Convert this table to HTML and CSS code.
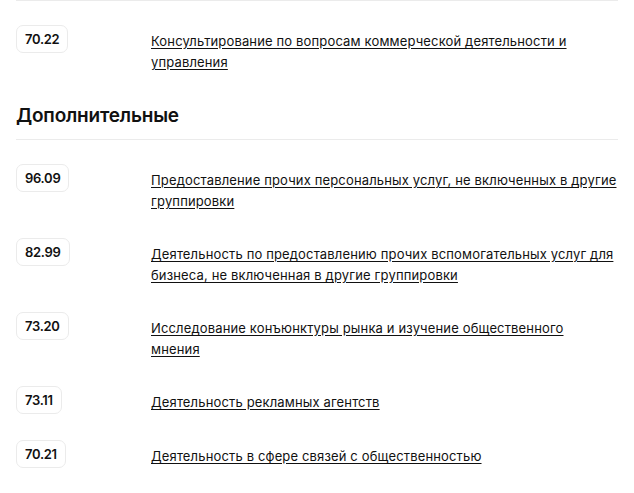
FILE: index.html
```html
<!DOCTYPE html>
<html lang="ru">
<head>
<meta charset="utf-8">
<link rel="stylesheet" href="styles.css">
</head>
<body>
<div class="page">
  <div class="divider"></div>
  <ul class="okved-list">
    <li class="okved-item">
      <span class="code">70.22</span>
      <a class="title" href="#">Консультирование по вопросам коммерческой деятельности и управления</a>
    </li>
  </ul>
  <h2 class="section-title">Дополнительные</h2>
  <div class="divider"></div>
  <ul class="okved-list">
    <li class="okved-item">
      <span class="code">96.09</span>
      <a class="title" href="#">Предоставление прочих персональных услуг, не включенных в другие группировки</a>
    </li>
    <li class="okved-item">
      <span class="code">82.99</span>
      <a class="title" href="#">Деятельность по предоставлению прочих вспомогательных услуг для бизнеса, не включенная в другие группировки</a>
    </li>
    <li class="okved-item">
      <span class="code">73.20</span>
      <a class="title" href="#">Исследование конъюнктуры рынка и изучение общественного<br>мнения</a>
    </li>
    <li class="okved-item">
      <span class="code">73.11</span>
      <a class="title" href="#">Деятельность рекламных агентств</a>
    </li>
    <li class="okved-item">
      <span class="code">70.21</span>
      <a class="title" href="#">Деятельность в сфере связей с общественностью</a>
    </li>
    <li class="okved-item">
      <span class="code">70.10</span>
      <a class="title" href="#">Деятельность головных офисов</a>
    </li>
  </ul>
</div>
</body>
</html>
```

FILE: styles.css
```css
* { box-sizing: border-box; }
html, body { margin: 0; padding: 0; background: #fff; }
body {
  font-family: Inter, "Noto Sans", sans-serif;
  color: #111;
  height: 493px;
  overflow: hidden;
}
.page { padding: 0 16px; }
.divider { height: 1px; background: #ebebeb; }
.okved-list { list-style: none; margin: 0; padding: 24px 0 0; }
.okved-item {
  display: grid;
  grid-template-columns: 135px minmax(0, 467px);
  align-items: start;
  padding-bottom: 26px;
}
.code {
  justify-self: start;
  display: inline-block;
  border: 1px solid #ebebeb;
  border-radius: 7px;
  padding: 5px 8px;
  font-size: 13px;
  font-weight: 600;
  line-height: 16px;
  letter-spacing: -0.3px;
}
.title {
  padding-top: 6px;
  font-size: 13px;
  line-height: 21px;
  letter-spacing: 0.15px;
  color: #111;
  text-decoration: underline;
  text-underline-offset: 2px;
}
.section-title {
  margin: 3px 0 0;
  padding: 0 0 9px;
  font-size: 19px;
  line-height: 28px;
  font-weight: 600;
  letter-spacing: -0.2px;
}
```
